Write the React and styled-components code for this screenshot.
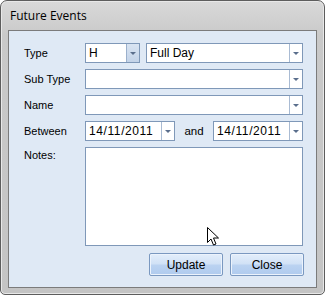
import React from "react"
import styled, { createGlobalStyle } from "styled-components"

const Global = createGlobalStyle`
  html, body { margin: 0; padding: 0; background: #ffffff; }
  body { width: 325px; height: 295px; overflow: hidden; }
`

const Window = styled.div`
  position: relative;
  box-sizing: border-box;
  width: 325px;
  height: 295px;
  border: 1px solid #5d5d5d;
  border-radius: 7px 7px 5px 5px;
  background: linear-gradient(180deg, #d9d9d9 0%, #c9c9c9 12%, #c4c4c4 100%);
  box-shadow: inset 0 0 0 1px #e8e8e8;
  display: flex;
  flex-direction: column;
  padding: 0 7px 6px 7px;
`

const TitleBar = styled.div`
  height: 29px;
  display: flex;
  align-items: center;
  padding-left: 2px;
  font-family: "Open Sans", "Liberation Sans", sans-serif;
  font-size: 12px;
  color: #000;
`

const Client = styled.div`
  flex: 1;
  box-sizing: border-box;
  border: 1px solid #7b7b7b;
  background: #dfe9f5;
  padding: 12px 13px 0 15px;
  font-family: "Liberation Sans", Arial, sans-serif;
  font-size: 11px;
  color: #000;
  display: flex;
  flex-direction: column;
`

const Form = styled.div`
  display: grid;
  grid-template-columns: 61px 218px;
  row-gap: 6px;
`

const Label = styled.div`
  display: flex;
  align-items: ${(p) => (p.$top ? "flex-start" : "center")};
  padding-top: ${(p) => (p.$top ? "2px" : "0")};
  height: ${(p) => (p.$top ? "auto" : "20px")};
`

const Row = styled.div`
  display: flex;
  align-items: center;
  gap: ${(p) => p.$gap || 0}px;
`

const Combo = styled.div`
  box-sizing: border-box;
  width: ${(p) => (p.$w ? `${p.$w}px` : "100%")};
  height: 20px;
  border: 1px solid #7f98b8;
  background: #ffffff;
  display: flex;
  align-items: stretch;
`

const ComboText = styled.div`
  flex: 1;
  display: flex;
  align-items: center;
  padding-left: 3px;
  font-size: 12px;
  letter-spacing: ${(p) => (p.$date ? "0.6px" : "0")};
  white-space: nowrap;
  overflow: hidden;
`

const DropButton = styled.div`
  width: 12px;
  border-left: 1px solid ${(p) => (p.$hot ? "#9bb0cc" : "#a9bbd3")};
  background: ${(p) => (p.$hot ? "linear-gradient(180deg,#d9e4f2,#c3d3e8)" : "#ffffff")};
  display: flex;
  align-items: center;
  justify-content: center;
  &::after {
    content: "";
    border-left: 3px solid transparent;
    border-right: 3px solid transparent;
    border-top: 3px solid #5a6e8c;
  }
`

const AndLabel = styled.div`
  width: 38px;
  text-align: center;
  font-size: 11.5px;
`

const Notes = styled.div`
  box-sizing: border-box;
  height: 99px;
  border: 1px solid #7f98b8;
  background: #ffffff;
`

const Buttons = styled.div`
  display: flex;
  justify-content: flex-end;
  gap: 7px;
  margin-right: -1px;
  margin-top: 7px;
`

const Button = styled.div`
  box-sizing: border-box;
  width: 74px;
  height: 23px;
  border: 1px solid #7a98c0;
  border-radius: 2px;
  background: linear-gradient(180deg, #e3eefb 0%, #d2e2f6 45%, #bad2f1 55%, #b0cbee 100%);
  box-shadow: inset 0 0 0 1px #ecf3fc;
  display: flex;
  align-items: center;
  justify-content: center;
  font-size: 12px;
`

const Cursor = styled.svg`
  position: absolute;
  left: 206px;
  top: 226px;
`

function ComboBox({ value, width, hot, date }) {
  return (
    <Combo $w={width}>
      <ComboText $date={date}>{value}</ComboText>
      <DropButton $hot={hot} />
    </Combo>
  )
}

export default function App() {
  return (
    <>
      <Global />
      <Window>
        <TitleBar>Future Events</TitleBar>
        <Client>
          <Form>
            <Label>Type</Label>
            <Row $gap={6}>
              <ComboBox value="H" width={55} hot />
              <ComboBox value="Full Day" width={157} />
            </Row>

            <Label>Sub Type</Label>
            <ComboBox value="" />

            <Label>Name</Label>
            <ComboBox value="" />

            <Label>Between</Label>
            <Row>
              <ComboBox value="14/11/2011" width={90} date />
              <AndLabel>and</AndLabel>
              <ComboBox value="14/11/2011" width={90} date />
            </Row>

            <Label $top>Notes:</Label>
            <Notes />
          </Form>
          <Buttons>
            <Button>Update</Button>
            <Button>Close</Button>
          </Buttons>
        </Client>
        <Cursor width="13" height="20" viewBox="0 0 13 20">
          <path
            d="M0.5 0.5 L0.5 15.5 L4 12 L6.5 18 L9 17 L6.5 11 L11.5 11 Z"
            fill="#ffffff"
            stroke="#000000"
            strokeWidth="1"
            strokeLinejoin="miter"
          />
        </Cursor>
      </Window>
    </>
  )
}
